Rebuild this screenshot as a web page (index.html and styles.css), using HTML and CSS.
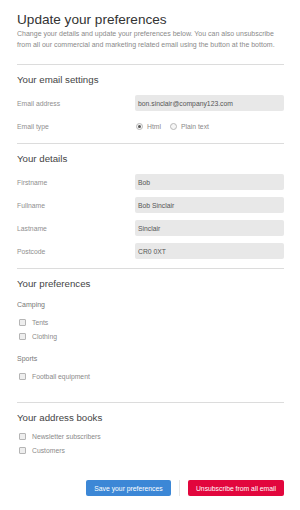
FILE: index.html
```html
<!DOCTYPE html>
<html lang="en">
<head>
<meta charset="utf-8">
<title>Update your preferences</title>
<link rel="stylesheet" href="styles.css">
</head>
<body>
<div class="page">
  <h1 class="title">Update your preferences</h1>
  <p class="intro">Change your details and update your preferences below. You can also unsubscribe from all our commercial and marketing related email using the button at the bottom.</p>

  <section class="section">
    <h2 class="heading">Your email settings</h2>
    <div class="rows">
      <div class="row"><span class="label">Email address</span><span class="field">bon.sinclair@company123.com</span></div>
      <div class="row"><span class="label">Email type</span>
        <span class="radios">
          <span class="radio"><span class="dot on"></span>Html</span>
          <span class="radio"><span class="dot"></span>Plain text</span>
        </span>
      </div>
    </div>
  </section>

  <section class="section">
    <h2 class="heading">Your details</h2>
    <div class="rows">
      <div class="row"><span class="label">Firstname</span><span class="field">Bob</span></div>
      <div class="row"><span class="label">Fullname</span><span class="field">Bob Sinclair</span></div>
      <div class="row"><span class="label">Lastname</span><span class="field">Sinclair</span></div>
      <div class="row"><span class="label">Postcode</span><span class="field">CR0 0XT</span></div>
    </div>
  </section>

  <section class="section section-prefs">
    <h2 class="heading">Your preferences</h2>
    <div class="group">
      <h3 class="group-title">Camping</h3>
      <div class="checks">
        <span class="check"><span class="box"></span>Tents</span>
        <span class="check"><span class="box"></span>Clothing</span>
      </div>
    </div>
    <div class="group">
      <h3 class="group-title">Sports</h3>
      <div class="checks">
        <span class="check"><span class="box"></span>Football equipment</span>
      </div>
    </div>
  </section>

  <section class="section section-books">
    <h2 class="heading">Your address books</h2>
    <div class="checks books">
      <span class="check"><span class="box"></span>Newsletter subscribers</span>
      <span class="check"><span class="box"></span>Customers</span>
    </div>
  </section>

  <div class="actions">
    <button class="btn btn-save" type="button">Save your preferences</button>
    <span class="divider"></span>
    <button class="btn btn-unsub" type="button">Unsubscribe from all email</button>
  </div>
</div>
</body>
</html>
```

FILE: styles.css
```css
html, body {
  margin: 0;
  padding: 0;
  background: #ffffff;
}

body {
  font-family: "Liberation Sans", Arial, sans-serif;
  color: #333333;
}

.page {
  width: 267px;
  padding: 12px 16px 0 17px;
}

.title {
  margin: 0;
  font-size: 13.6px;
  line-height: 16px;
  font-weight: normal;
  color: #333333;
}

.intro {
  margin: 0 0 14px;
  font-size: 7px;
  line-height: 11px;
  color: #8a8a8a;
}

.section {
  border-top: 1px solid #dcdcdc;
  padding: 8px 0 9px;
}

.heading {
  margin: 0 0 8px;
  font-size: 9.7px;
  line-height: 14px;
  font-weight: normal;
  color: #444444;
}

.rows {
  display: flex;
  flex-direction: column;
  gap: 7px;
}

.row {
  display: grid;
  grid-template-columns: 118px 149px;
  align-items: center;
  height: 16px;
}

.label {
  font-size: 6.8px;
  color: #8f8f8f;
}

.field {
  display: flex;
  align-items: center;
  height: 16px;
  padding-left: 3px;
  background: #e8e8e8;
  border-radius: 2px;
  font-size: 6.8px;
  color: #555555;
}

.radios {
  display: flex;
  align-items: center;
  gap: 9px;
  padding-left: 1px;
}

.radio {
  display: flex;
  align-items: center;
  gap: 4px;
  font-size: 6.8px;
  color: #8a8a8a;
}

.dot {
  position: relative;
  width: 5px;
  height: 5px;
  border: 0.5px solid #b8b8b8;
  border-radius: 50%;
  background: #f6f6f6;
}

.dot.on::after {
  content: "";
  position: absolute;
  left: 1px;
  top: 1px;
  width: 3px;
  height: 3px;
  border-radius: 50%;
  background: #555555;
}

.section-prefs {
  padding-bottom: 20px;
}

.group + .group {
  margin-top: 11px;
}

.group-title {
  margin: 0 0 7px;
  font-size: 7px;
  line-height: 11px;
  font-weight: normal;
  color: #777777;
}

.checks {
  display: flex;
  flex-direction: column;
  gap: 3px;
}

.books {
  margin-top: -2px;
}

.check {
  display: flex;
  align-items: center;
  gap: 6px;
  height: 11px;
  padding-left: 2px;
  font-size: 6.8px;
  color: #8a8a8a;
}

.box {
  width: 5px;
  height: 5px;
  border: 0.5px solid #b5b5b5;
  border-radius: 1px;
  background: #eeeeee;
}

.section-books {
  padding-bottom: 0;
}

.actions {
  display: flex;
  justify-content: flex-end;
  align-items: center;
  margin-top: 24px;
}

.btn {
  height: 16px;
  padding: 0;
  border: none;
  border-radius: 2px;
  font-family: "Liberation Sans", Arial, sans-serif;
  font-size: 6.8px;
  color: #ffffff;
}

.btn-save {
  width: 85px;
  background: #3c87d6;
}

.btn-unsub {
  width: 96px;
  background: #e2063d;
}

.divider {
  width: 1px;
  height: 16px;
  margin: 0 8px;
  background: #e6e6e6;
}
```
